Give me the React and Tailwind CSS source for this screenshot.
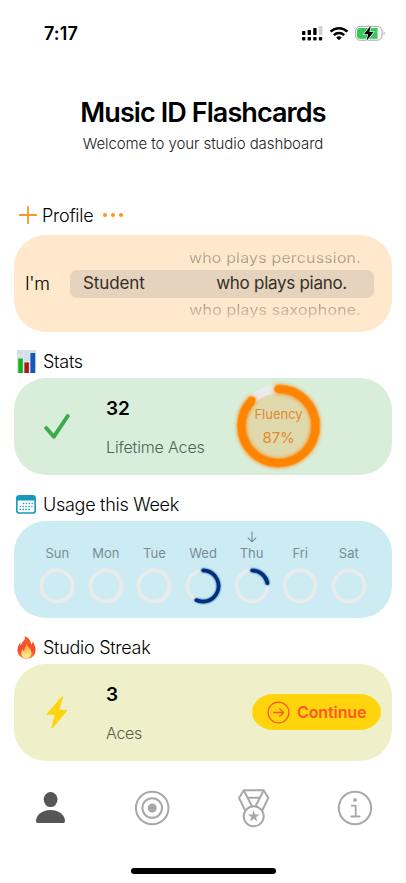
const days = [
    { name: "Sun", value: 0 },
    { name: "Mon", value: 0 },
    { name: "Tue", value: 0 },
    { name: "Wed", value: 0.57 },
    { name: "Thu", value: 0.22, today: true },
    { name: "Fri", value: 0 },
    { name: "Sat", value: 0 },
]

const StatusBar = () => {
    return (
        <header className="h-[66px] pl-[44px] pr-[20px] flex justify-between items-center">
            <span className="font-semibold text-[18px] tracking-[0.1px]">7:17</span>
            <div className="flex items-center">
                <svg width="22" height="16" viewBox="0 0 22 16">
                    <rect x="1" y="6" width="3.4" height="4" rx="0.8" />
                    <rect x="6.6" y="5" width="3.4" height="5" rx="0.8" />
                    <rect x="12.2" y="3" width="3.4" height="7" rx="0.8" />
                    <rect x="17.8" y="1" width="3.6" height="9" rx="0.8" fill="#d0d0d0" />
                    <rect x="1" y="12" width="3.4" height="3.4" rx="0.8" />
                    <rect x="6.6" y="12" width="3.4" height="3.4" rx="0.8" />
                    <rect x="12.2" y="12" width="3.4" height="3.4" rx="0.8" />
                    <rect x="17.8" y="12" width="3.4" height="3.4" rx="0.8" />
                </svg>
                <svg className="ml-[6px]" width="20" height="15" viewBox="0 0 20 15" fill="none" stroke="#000" strokeWidth="2.5">
                    <path d="M1.6 5.7a12 12 0 0 1 16.8 0" />
                    <path d="M4.9 9.1a7.3 7.3 0 0 1 10.2 0" />
                    <path d="M10 14.3 7.2 11.5a4 4 0 0 1 5.6 0Z" fill="#000" stroke="none" />
                </svg>
                <svg className="ml-[6px]" width="31" height="17" viewBox="0 0 31 17">
                    <rect x="0.6" y="1.4" width="26.4" height="13.8" rx="4.4" fill="#fff" stroke="#a5a5a5" />
                    <path d="M5 2.9h17.5v10.8H5a3 3 0 0 1-3-3V5.9a3 3 0 0 1 3-3Z" fill="#34c759" />
                    <path d="M28.6 6.2c1.4.5 1.4 3.7 0 4.2Z" fill="#a5a5a5" />
                    <path d="M15.9.6 8.8 9.3h4.3L11.4 16l7.3-8.9h-4.3Z" fill="#000" stroke="#fff" strokeWidth="1.3" paintOrder="stroke" />
                </svg>
            </div>
        </header>
    )
}

const SectionTitle = ({ icon, children }) => {
    return (
        <div className="h-[45.5px] pl-[15px] pb-[4px] flex items-end">
            <div className="h-6 flex items-center">
                <span className="w-[22px] flex justify-center">{icon}</span>
                <h2 className="ml-[6px] text-[18px] font-light tracking-[-0.28px]">{children}</h2>
            </div>
        </div>
    )
}

const DayRing = ({ value }) => {
    return (
        <svg className="overflow-visible" width="36" height="36" viewBox="0 0 36 36" fill="none" strokeWidth="3.7">
            <circle cx="18" cy="18" r="15.6" stroke="#ebebee" />
            {
                value > 0 &&
                <circle className="drop-shadow-[0_0_1px_#0050a0]" cx="18" cy="18" r="15.6" stroke="#002f7d" strokeLinecap="round" pathLength="100" strokeDasharray={`${value * 100} 100`} transform="rotate(-90 18 18)" />
            }
        </svg>
    )
}

const ChartIcon = () => (
    <svg width="19" height="23" viewBox="0 0 19 23">
        <rect width="19" height="23" fill="#d5dfeb" />
        <path d="M0 5.5h19M0 11.5h19M0 17h19M6.5 0v23M13 0v23" stroke="#e3eaf2" strokeWidth="0.7" />
        <rect x="1.3" y="8.5" width="4.5" height="14.5" fill="#10b51b" />
        <rect x="7.4" y="12.5" width="4.5" height="10.5" fill="#b5131d" />
        <rect x="13.4" y="3" width="4.8" height="20" fill="#1459b8" />
    </svg>
)

const CalendarIcon = () => (
    <svg width="20" height="19" viewBox="0 0 20 19">
        <rect x="0.8" y="0.8" width="18.4" height="17.2" rx="2.6" fill="#fff" stroke="#1599bb" strokeWidth="1.6" />
        <path d="M1 5.4V3.2A2.4 2.4 0 0 1 3.4 1h13.2A2.4 2.4 0 0 1 19 3.2v2.2Z" fill="#1599bb" />
        <path d="M7.5 8.5h9M4.3 11.5h12M4.3 14.4h9" stroke="#1599bb" strokeWidth="1.6" strokeLinecap="round" strokeDasharray="0 2.9" />
    </svg>
)

const FireIcon = () => (
    <svg width="19" height="23" viewBox="0 0 19 23">
        <defs>
            <linearGradient id="flame" x1="0" y1="0" x2="0" y2="1">
                <stop offset="0" stopColor="#f4612c" />
                <stop offset="0.65" stopColor="#f5482b" />
                <stop offset="1" stopColor="#ff8b25" />
            </linearGradient>
            <linearGradient id="core" x1="0" y1="0" x2="0" y2="1">
                <stop offset="0" stopColor="#ffa52e" />
                <stop offset="1" stopColor="#fff0a0" />
            </linearGradient>
        </defs>
        <path d="M7.7.3c4.2 1.3 6.4 4.9 6.5 8.3.9-.7 1.3-1.8 1.2-3 2 2.3 3.1 5.4 3.1 8.6 0 5.3-3.9 8.5-9 8.5S.5 19.3.5 14.3c0-3.2 1.2-5.8 2.7-7.9 0 1.4.2 2.4.9 3.2C4 6 8.900 5 7.700.3Z" fill="url(#flame)" />
        <path d="M9.800 7.600c.2 3.300 4.700 4.800 4.700 9.400 0 3.300-2.200 5.200-5 5.200S4.300 20.200 4.300 17.200c0-2 .8-3.400 1.700-4.400 0 1.300.4 2.200 1.200 2.700-.2-3.200 1.800-4.700 2.600-7.900Z" fill="url(#core)" />
    </svg>
)

const Profile = () => {
    return (
        <section>
            <div className="h-10 pl-[18px] pb-2 flex items-end">
                <div className="h-6 flex items-center">
                    <svg width="20" height="20" viewBox="0 0 20 20" stroke="#ff9420" strokeWidth="1.8" strokeLinecap="round">
                        <path d="M10 1.8v16.4M1.8 10h16.4" />
                    </svg>
                    <h2 className="ml-[4px] w-[60px] text-[18px] font-light tracking-[-0.25px]">Profile</h2>
                    <svg width="22" height="6" viewBox="0 0 22 6" fill="#ff9420">
                        <circle cx="3" cy="3" r="2" />
                        <circle cx="11" cy="3" r="2" />
                        <circle cx="19" cy="3" r="2" />
                    </svg>
                </div>
            </div>
            <div className="h-[97px] mx-[14px] pl-[11px] pr-[18px] rounded-[32px] bg-[#ffe8cc] flex items-center">
                <span className="w-[45px] text-[18px] font-light tracking-[-0.4px]">I'm</span>
                <div className="flex-1 flex flex-col">
                    <div className="h-[20px] mb-[2px] pr-[13px] flex justify-end items-center">
                        <span className="text-[16px] leading-[20px] tracking-[0.15px] bg-linear-to-b from-[#d3c0a9] to-[#9f9283] bg-clip-text text-transparent origin-right scale-y-[0.88]">who plays percussion.</span>
                    </div>
                    <div className="h-7 pl-[13px] pr-[27px] rounded-[7px] bg-[#e5d3bd] flex justify-between items-center text-[17px] text-[#332f29]">
                        <span className="pt-[1px] tracking-[-0.1px]">Student</span>
                        <span className="pt-[1px] tracking-[-0.28px]">who plays piano.</span>
                    </div>
                    <div className="h-[20px] mt-[2px] pr-[13px] flex justify-end items-center">
                        <span className="text-[16px] leading-[20px] tracking-[0.15px] bg-linear-to-b from-[#9f9283] to-[#e0cdb4] bg-clip-text text-transparent origin-right scale-y-[0.88]">who plays saxophone.</span>
                    </div>
                </div>
            </div>
        </section>
    )
}

const Stats = () => {
    return (
        <section>
            <SectionTitle icon={<ChartIcon />}>Stats</SectionTitle>
            <div className="h-[97.5px] mx-[14px] rounded-[32px] bg-[#d8eedb] flex items-center">
                <div className="w-[92px] pl-[30px]">
                    <svg width="26" height="26" viewBox="0 0 26 26" fill="none" stroke="#38ad49" strokeWidth="3.9" strokeLinecap="round" strokeLinejoin="round">
                        <path d="M2.3 15 9.8 23.8 23.7 3" />
                    </svg>
                </div>
                <div className="w-[131px] pt-[3px] flex flex-col gap-[14px]">
                    <span className="text-[19px] leading-6 font-semibold">32</span>
                    <span className="text-[16px] leading-6 font-light tracking-[-0.15px] text-[#53605a] whitespace-nowrap">Lifetime Aces</span>
                </div>
                <div className="relative size-[84px]">
                    <svg className="overflow-visible" width="84" height="84" viewBox="0 0 84 84" fill="none" strokeWidth="8.5">
                        <circle cx="41.5" cy="42" r="37" fill="#e0d9ae" stroke="#ebebeb" />
                        <circle className="drop-shadow-[0_0_2px_#ff8400]" cx="41.5" cy="42" r="37" stroke="#ff8400" strokeLinecap="round" pathLength="100" strokeDasharray="87 100" transform="rotate(-90 41.5 42)" />
                    </svg>
                    <div className="absolute inset-0 pr-px pb-px flex flex-col justify-center items-center gap-1 text-[#e28a2b]">
                        <span className="text-[13px] leading-5">Fluency</span>
                        <span className="text-[15px] leading-5 tracking-[-0.2px]">87%</span>
                    </div>
                </div>
            </div>
        </section>
    )
}

const Usage = () => {
    return (
        <section>
            <SectionTitle icon={<CalendarIcon />}>Usage this Week</SectionTitle>
            <div className="h-[97.5px] mx-[14px] px-[19px] rounded-[32px] bg-[#cdebf3] flex">
                {
                    days.map((day) => (
                        <div key={day.name} className="flex-1 pt-[10px] flex flex-col items-center">
                            <div className="h-[12px]">
                                {
                                    day.today &&
                                    <svg width="10" height="12" viewBox="0 0 10 12" fill="none" stroke="#788d93" strokeWidth="1.1" strokeLinecap="round" strokeLinejoin="round">
                                        <path d="M5 1v9.5M1.2 7 5 10.8 8.8 7" />
                                    </svg>
                                }
                            </div>
                            <span className="h-[20px] mb-[5px] text-[13px] leading-[20px] text-[#788d93]">{day.name}</span>
                            <DayRing value={day.value} />
                        </div>
                    ))
                }
            </div>
        </section>
    )
}

const Streak = () => {
    return (
        <section>
            <SectionTitle icon={<FireIcon />}>Studio Streak</SectionTitle>
            <div className="h-[97.5px] mx-[14px] pr-[11px] rounded-[32px] bg-[#efefca] flex items-center">
                <div className="w-[92px] pl-[32px]">
                    <svg width="22" height="33" viewBox="0 0 22 33">
                        <path d="M15.6.7 1 17.5c-.6.7-.3 1.3.6 1.3h7.2L5.4 31.1c-.4 1.2.5 1.7 1.3.8L21 15.1c.6-.7.3-1.3-.6-1.3h-7.1L17 1.5C17.4.3 16.4-.1 15.6.7Z" fill="#ffd30f" />
                    </svg>
                </div>
                <div className="flex-1 pt-[3px] flex flex-col gap-[14px]">
                    <span className="text-[19px] leading-6 font-semibold">3</span>
                    <span className="text-[16px] leading-6 font-light tracking-[-0.3px] text-[#5c5c4c]">Aces</span>
                </div>
                <button className="w-[129px] h-9 pl-[15px] rounded-[22px/18px] bg-[#ffd40c] flex items-center text-[#ff5722]">
                    <svg width="23" height="23" viewBox="0 0 23 23" fill="none" stroke="currentColor" strokeWidth="1.3" strokeLinecap="round" strokeLinejoin="round">
                        <circle cx="11.5" cy="11.5" r="10.4" />
                        <path d="M6.5 11.5h10M12.7 7.6l3.9 3.9-3.9 3.9" />
                    </svg>
                    <span className="ml-[7px] text-[16px] font-semibold tracking-[-0.1px]">Continue</span>
                </button>
            </div>
        </section>
    )
}

const TabBar = () => {
    return (
        <nav className="h-[94px] flex justify-between pt-[28px] pl-[32px] pr-[33px]">
            <svg width="36" height="38" viewBox="0 0 36 38" fill="#565656">
                <ellipse cx="18.6" cy="10.6" rx="6.9" ry="7.5" />
                <path d="M6.2 34C4.7 34 4 33.2 4 31.7 4 27 9.300 21 18.500 21S33 27 33 31.700c0 1.500-.7 2.300-2.200 2.300Z" />
            </svg>
            <svg width="36" height="38" viewBox="0 0 36 38" fill="none" stroke="#a8a8a8" strokeWidth="2">
                <circle cx="18.2" cy="19" r="16.3" />
                <circle cx="18.2" cy="19" r="9.8" />
                <circle cx="18.2" cy="19" r="4.5" fill="#a8a8a8" stroke="none" />
            </svg>
            <svg className="overflow-visible" width="36" height="38" viewBox="-0.700 0 36 38" fill="none" stroke="#a8a8a8" strokeWidth="2" strokeLinejoin="round">
                <circle cx="18" cy="27.3" r="10" />
                <path d="M9.5 21.5 3.4 9 8 1.3h20L32.6 9l-6.1 12.500M8 1.300l8.200 16M28 1.300l-8.200 16M12 8.800h12" />
                <path d="m18 21.200 1.450 4.200 4.400.05-3.500 2.700 1.300 4.250L18 29.850l-3.650 2.550 1.300-4.250-3.500-2.700 4.400-.05Z" fill="#a8a8a8" stroke="none" />
            </svg>
            <svg width="36" height="38" viewBox="0 0 36 38" fill="none" stroke="#a8a8a8" strokeWidth="2" strokeLinecap="round" strokeLinejoin="round">
                <circle cx="18" cy="19" r="16.2" />
                <circle cx="18" cy="10.9" r="1.9" fill="#a8a8a8" stroke="none" />
                <path d="M14.7 16.7h4v10.8M14.3 27.500h8.300" strokeWidth="1.800" />
            </svg>
        </nav>
    )
}

const App = () => {
    return (
        <div className="w-full h-[883px] overflow-hidden bg-white text-black font-['Inter','Liberation_Sans',sans-serif]">
            <StatusBar />
            <div className="h-[129px] pt-[30px] flex flex-col items-center">
                <h1 className="text-[27px] leading-[34px] font-semibold tracking-[-0.92px]">Music ID Flashcards</h1>
                <p className="mt-[4px] text-[15px] leading-5 font-light tracking-[-0.08px] text-[#222]">Welcome to your studio dashboard</p>
            </div>
            <Profile />
            <Stats />
            <Usage />
            <Streak />
            <TabBar />
            <div className="mt-[13px] mx-auto w-[145px] h-[5.5px] rounded-full bg-black"></div>
        </div>
    )
}

export default App
